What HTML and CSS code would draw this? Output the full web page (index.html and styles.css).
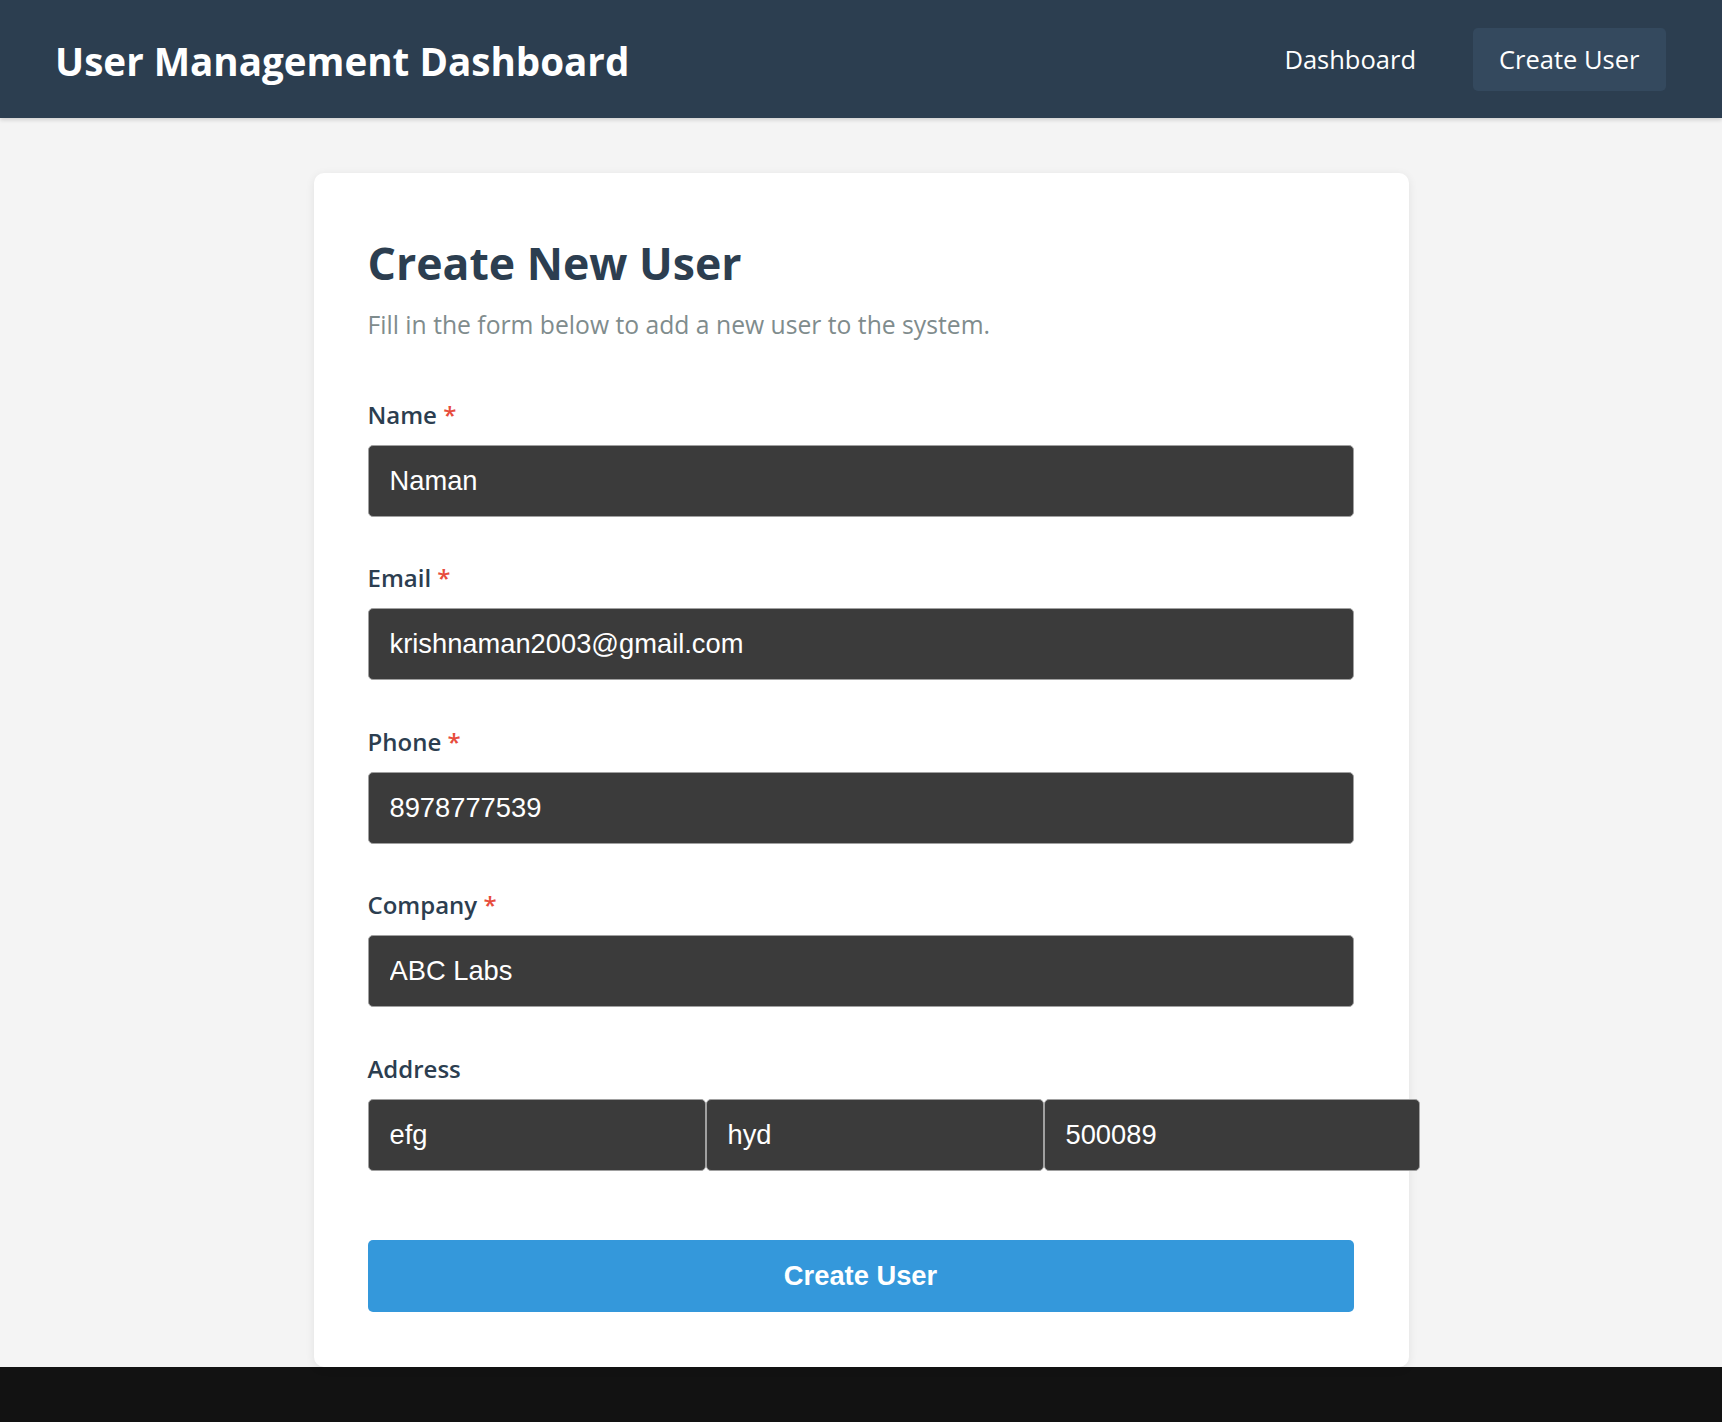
FILE: index.html
```html
<!DOCTYPE html>
<html lang="en">
<head>
<meta charset="utf-8">
<title>User Management Dashboard</title>
<link rel="stylesheet" href="styles.css">
</head>
<body>
<header class="topbar">
  <h1 class="brand">User Management Dashboard</h1>
  <nav class="nav">
    <a class="nav-link" href="#">Dashboard</a>
    <a class="nav-link nav-link-active" href="#">Create User</a>
  </nav>
</header>
<main class="main">
  <section class="card">
    <h2 class="card-title">Create New User</h2>
    <p class="card-subtitle">Fill in the form below to add a new user to the system.</p>
    <form class="form">
      <div class="field">
        <label class="label">Name <span class="req">*</span></label>
        <input class="input" type="text" value="Naman">
      </div>
      <div class="field">
        <label class="label">Email <span class="req">*</span></label>
        <input class="input" type="text" value="krishnaman2003@gmail.com">
      </div>
      <div class="field">
        <label class="label">Phone <span class="req">*</span></label>
        <input class="input" type="text" value="8978777539">
      </div>
      <div class="field">
        <label class="label">Company <span class="req">*</span></label>
        <input class="input" type="text" value="ABC Labs">
      </div>
      <div class="field">
        <label class="label">Address</label>
        <div class="address-row">
          <input class="input addr-street" type="text" value="efg">
          <input class="input addr-city" type="text" value="hyd">
          <input class="input addr-zip" type="text" value="500089">
        </div>
      </div>
      <button class="submit" type="button">Create User</button>
    </form>
  </section>
</main>
</body>
</html>
```
FILE: styles.css
```css
* { box-sizing: border-box; }

html, body {
  margin: 0;
  padding: 0;
}

body {
  background: #121212;
  font-family: "Open Sans", "Noto Sans", sans-serif;
  min-height: 1422px;
}

.topbar {
  height: 118px;
  background: #2c3e50;
  display: flex;
  align-items: center;
  justify-content: space-between;
  padding: 0 56px 0 55px;
  box-shadow: 0 2px 4px rgba(0, 0, 0, 0.15);
  position: relative;
  z-index: 1;
}

.brand {
  margin: 0;
  padding-top: 4px;
  color: #ffffff;
  font-size: 38.6px;
  font-weight: 700;
  line-height: 52px;
}

.nav {
  display: flex;
  align-items: center;
  gap: 30px;
}

.nav-link {
  color: #ffffff;
  text-decoration: none;
  font-size: 25.5px;
  line-height: 35px;
  padding: 14px 26.5px;
  border-radius: 5px;
}

.nav-link-active {
  background: #34495e;
}

.main {
  background: #f4f4f4;
  padding-top: 55px;
}

.card {
  width: 1095px;
  margin: 0 auto;
  background: #ffffff;
  border-radius: 10px;
  box-shadow: 0 2px 10px rgba(0, 0, 0, 0.08);
  padding: 55px 55px 55px 54px;
}

.card-title {
  margin: 10px 0 21px;
  color: #2c3e50;
  font-size: 44.6px;
  font-weight: 700;
  line-height: 50px;
}

.card-subtitle {
  margin: 0 0 57.5px;
  color: #7f8c8d;
  font-size: 24.7px;
  line-height: 32px;
}

.form {
  margin: 0;
}

.field {
  margin-bottom: 45.5px;
}

.label {
  display: block;
  margin-bottom: 14px;
  color: #2c3e50;
  font-size: 24px;
  font-weight: 600;
  line-height: 32px;
}

.req {
  color: #e74c3c;
}

.input {
  display: block;
  width: 100%;
  height: 72px;
  margin: 0;
  padding: 0 21px;
  background: #3b3b3b;
  color: #ffffff;
  border: 1px solid #a0a0a0;
  border-radius: 5px;
  font-family: "Liberation Sans", Arial, sans-serif;
  font-size: 27.3px;
  outline: none;
}

.address-row {
  display: flex;
  width: 100%;
}

.address-row .input {
  flex: none;
}

.addr-street { width: 338px; }
.addr-city { width: 338px; }
.addr-zip { width: 376px; }

.submit {
  display: block;
  width: 100%;
  height: 72px;
  margin-top: 69px;
  background: #3498db;
  color: #ffffff;
  border: none;
  border-radius: 5px;
  font-family: "Liberation Sans", Arial, sans-serif;
  font-size: 27.3px;
  font-weight: 700;
}
```
